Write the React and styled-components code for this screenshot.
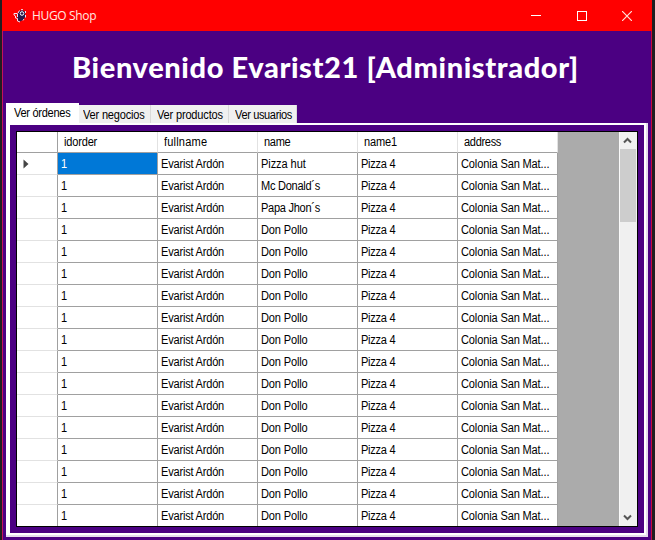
import React from "react";
import styled, { createGlobalStyle } from "styled-components";

const Global = createGlobalStyle`
  * { box-sizing: border-box; }
  body { margin: 0; overflow: hidden; background: #1e1a1e; }
`;

const Desktop = styled.div`
  width: 655px;
  height: 540px;
  padding: 0 3px 0 2px;
  background: #211d20;
  font-family: "Liberation Sans", Arial, sans-serif;
  font-size: 12px;
  color: #000;
`;

const Window = styled.div`
  display: flex;
  flex-direction: column;
  height: 540px;
  background: #4b0082;
  border-left: 1px solid #c3125c;
  border-right: 1px solid #c80a3c;
`;

const TitleBar = styled.header`
  display: flex;
  align-items: center;
  flex: none;
  height: 31px;
  margin: 0 -1px;
  padding: 0 2px 0 11px;
  background: #ff0000;
  color: #fff;
`;

const AppName = styled.span`
  flex: 1;
  margin-left: 5px;
  font-family: "Open Sans", sans-serif;
  font-size: 12px;
  line-height: 31px;
  letter-spacing: -0.35px;
  color: #ffe9e0;
`;

const WindowButton = styled.span`
  display: flex;
  align-items: center;
  justify-content: center;
  width: 45.5px;
  height: 31px;
`;

const Heading = styled.h1`
  flex: none;
  height: 72px;
  margin: 0;
  padding: 15px 0 0 69px;
  font-family: Lato, sans-serif;
  font-size: 29px;
  font-weight: 900;
  line-height: 42px;
  letter-spacing: 0.6px;
  white-space: pre;
  color: #fff;
`;

const Label = styled.span`
  display: inline-block;
  transform: scaleX(0.92);
  transform-origin: 0 50%;
  letter-spacing: ${(p) => p.$spacing}px;
  white-space: nowrap;
`;

const Tabs = styled.nav`
  display: flex;
  align-items: flex-end;
  flex: none;
  height: 20px;
  margin-left: 3px;
`;

const Tab = styled.span`
  width: ${(p) => p.$width}px;
  height: ${(p) => (p.$active ? 20 : 18)}px;
  padding-left: ${(p) => p.$indent}px;
  line-height: ${(p) => (p.$active ? 21 : 20)}px;
  background: ${(p) => (p.$active ? "#fff" : "#f0f0f0")};
  border-right: 1px solid ${(p) => (p.$active ? "#fff" : "#d9d9d9")};
`;

const TabPage = styled.main`
  flex: none;
  width: 642px;
  height: 414px;
  margin-left: 3px;
  padding: 2px 4px 4px;
  background: linear-gradient(#fff, #fff) 0 0 / 640px 412px no-repeat #e6dcee;
`;

const PageBody = styled.div`
  height: 408px;
  padding: 6px;
  background: #4b0082;
`;

const DataGrid = styled.section`
  display: flex;
  width: 622px;
  height: 396px;
  border: 1px solid #000;
  background: #ababab;
  overflow: hidden;
`;

const Rows = styled.div`
  flex: none;
  width: 541px;
`;

const Row = styled.div`
  display: grid;
  grid-template-columns: 41px repeat(5, 100px);
  grid-template-rows: 100%;
  height: ${(p) => (p.$header ? 21 : 22)}px;
`;

const RowHeader = styled.span`
  display: flex;
  align-items: center;
  padding-left: 6px;
  background: #fff;
  border-right: 1px solid #a0a0a0;
  border-bottom: 1px solid ${(p) => (p.$dark ? "#a0a0a0" : "#e2e2e2")};
`;

const ColumnHeader = styled.span`
  padding-left: 6px;
  line-height: 21px;
  background: #fff;
  border-right: 1px solid #e2e2e2;
  border-bottom: 1px solid #a0a0a0;
`;

const Cell = styled.span`
  padding-left: 3px;
  line-height: 22px;
  color: ${(p) => (p.$selected ? "#fff" : "#000")};
  background: ${(p) => (p.$selected ? "#0078d7" : "#fff")};
  border-right: 1px solid #a0a0a0;
  border-bottom: 1px solid #a0a0a0;
`;

const ScrollBar = styled.aside`
  display: flex;
  flex-direction: column;
  width: 18px;
  height: 394px;
  margin-left: auto;
  background: #f0f0f0;
  border-left: 1px solid #fafafa;
`;

const ScrollArrow = styled.span`
  display: flex;
  align-items: center;
  justify-content: center;
  height: 17px;
  padding-right: 2px;
`;

const Thumb = styled.span`
  height: 73px;
  margin-right: 1px;
  background: #cdcdcd;
`;

const Track = styled.span`
  flex: 1;
`;

const tabs = [
  { label: "Ver órdenes", width: 73, indent: 8, spacing: -0.31 },
  { label: "Ver negocios", width: 72, indent: 4, spacing: -0.2 },
  { label: "Ver productos", width: 78, indent: 6, spacing: -0.19 },
  { label: "Ver usuarios", width: 68, indent: 6, spacing: -0.4 },
];
const columns = [
  ["idorder", -0.2],
  ["fullname", 0.2],
  ["name", -0.35],
  ["name1", -0.2],
  ["address", -0.35],
];
const shops = [
  ["Pizza hut", -0.08],
  ["Mc Donald´s", -0.3],
  ["Papa Jhon´s", -0.3],
  ...Array(14).fill(["Don Pollo", -0.17]),
];

const BirdLogo = () => (
  <svg width="14" height="14" viewBox="0 0 14 14">
    <path d="M4.500 5.500l2-3.500 3-1 2.500 2v5l-2 3-3 1.500-2.500-1.500z" fill="#271a4b" />
    <path d="M4 4.500H1v1.500l1.500 1V9l2 .5V12l2.500 1M4.500 4.500V8M5 4l1.500-2.500M8 .7h2M12.500 2v2M12.500 6v2.500M11 10l-1 1.500" fill="none" stroke="#f3e6f7" />
    <circle cx="9" cy="4.500" r="1.800" fill="#271a4b" stroke="#fff" />
  </svg>
);

const Chevron = ({ down }) => (
  <svg width="9" height="7" viewBox="0 0 9 7">
    <path d={down ? "M1 1.500l3.500 3.500L8 1.500" : "M1 5.500L4.500 2 8 5.500"} fill="none" stroke="#555" strokeWidth="2" />
  </svg>
);

export default function App() {
  return (
    <Desktop>
      <Global />
      <Window>
        <TitleBar>
          <BirdLogo />
          <AppName>HUGO Shop</AppName>
          <WindowButton>
            <svg width="10" height="11"><path d="M0 5.500h10" stroke="#fff" /></svg>
          </WindowButton>
          <WindowButton>
            <svg width="10" height="10" shapeRendering="crispEdges"><path d="M.5.5h9v9h-9z" fill="none" stroke="#fff" /></svg>
          </WindowButton>
          <WindowButton>
            <svg width="10" height="10"><path d="M0 0l10 10M10 0L0 10" stroke="#ffe0dc" strokeWidth="1.200" /></svg>
          </WindowButton>
        </TitleBar>
        <Heading>Bienvenido Evarist21 [Administrador]</Heading>
        <Tabs>
          {tabs.map(({ label, width, indent, spacing }, i) => (
            <Tab key={label} $active={i === 0} $width={width} $indent={indent}>
              <Label $spacing={spacing}>{label}</Label>
            </Tab>
          ))}
        </Tabs>
        <TabPage>
          <PageBody>
            <DataGrid>
              <Rows>
                <Row $header>
                  <RowHeader $dark />
                  {columns.map(([name, spacing]) => (
                    <ColumnHeader key={name}><Label $spacing={spacing}>{name}</Label></ColumnHeader>
                  ))}
                </Row>
                {shops.map(([shop, spacing], i) => (
                  <Row key={i}>
                    <RowHeader>
                      {i === 0 && <svg width="6" height="10"><path d="M.5.5L5.500 5 .5 9.500z" fill="#444" /></svg>}
                    </RowHeader>
                    <Cell $selected={i === 0}><Label $spacing={0}>1</Label></Cell>
                    <Cell><Label $spacing={-0.22}>Evarist Ardón</Label></Cell>
                    <Cell><Label $spacing={spacing}>{shop}</Label></Cell>
                    <Cell><Label $spacing={-0.3}>Pizza 4</Label></Cell>
                    <Cell><Label $spacing={-0.15}>Colonia San Mat...</Label></Cell>
                  </Row>
                ))}
              </Rows>
              <ScrollBar>
                <ScrollArrow><Chevron /></ScrollArrow>
                <Thumb />
                <Track />
                <ScrollArrow><Chevron down /></ScrollArrow>
              </ScrollBar>
            </DataGrid>
          </PageBody>
        </TabPage>
      </Window>
    </Desktop>
  );
}
